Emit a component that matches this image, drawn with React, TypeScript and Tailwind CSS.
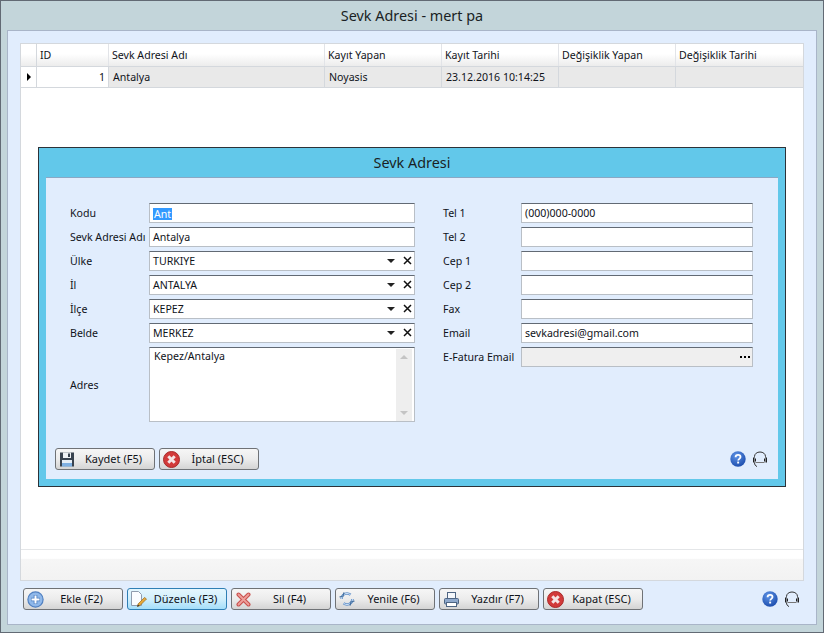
import type { ReactNode } from "react";

const columns = [
  { w: "w-[72px]", label: "ID", value: "1", right: true },
  { w: "w-[216px]", label: "Sevk Adresi Adı", value: "Antalya" },
  { w: "w-[117px]", label: "Kayıt Yapan", value: "Noyasis" },
  { w: "w-[117px]", label: "Kayıt Tarihi", value: "23.12.2016 10:14:25" },
  { w: "w-[117px]", label: "Değişiklik Yapan", value: "" },
  { w: "flex-1", label: "Değişiklik Tarihi", value: "" },
];

function HelpIcon() {
  return (
    <svg width="16" height="16" viewBox="0 0 16 16">
      <defs>
        <radialGradient id="helpFill" cx="40%" cy="30%" r="80%">
          <stop offset="0" stopColor="#5f94e6" />
          <stop offset="1" stopColor="#1546a8" />
        </radialGradient>
      </defs>
      <circle cx="8" cy="8" r="7.7" fill="url(#helpFill)" />
      <path d="M5.6 6.2c0-1.5 1.1-2.3 2.5-2.3s2.4.8 2.4 2.1c0 1.9-2.3 1.9-2.3 3.6" fill="none" stroke="#fff" strokeWidth="1.8" />
      <rect x="7.2" y="10.6" width="1.9" height="1.9" fill="#fff" />
    </svg>
  );
}

function HeadsetIcon() {
  return (
    <svg width="16" height="17" viewBox="0 0 16 17" fill="none" stroke="#333">
      <path d="M2.500 6.500V5.500C2.500 2.800 5 1 8 1s5.500 1.800 5.500 4.500v1" />
      <path d="M2.500 11.500c0 2.200 1 3.500 2.500 4" />
      <path d="M3.500 11.500h9" stroke="#777" />
      <rect x="1" y="6.500" width="1.500" height="5" fill="#222" stroke="none" />
      <rect x="3" y="7.500" width="1" height="3" fill="#222" stroke="none" />
      <rect x="12" y="7.500" width="1" height="3" fill="#222" stroke="none" />
      <rect x="13.500" y="6.500" width="1.500" height="5" fill="#222" stroke="none" />
    </svg>
  );
}

function SaveIcon() {
  return (
    <svg width="15" height="15" viewBox="0 0 15 15">
      <rect x="0" y="0.500" width="14" height="14" fill="#39434f" />
      <rect x="3" y="0.500" width="8" height="5.500" fill="#eef1f4" />
      <rect x="8" y="1.500" width="2" height="3.500" fill="#39434f" />
      <rect x="2" y="8" width="10" height="6.500" fill="#e6eef6" />
      <rect x="2" y="11" width="10" height="3.500" fill="#7fb0e2" />
    </svg>
  );
}

function CancelIcon() {
  return (
    <svg width="17" height="17" viewBox="0 0 17 17">
      <circle cx="8.500" cy="8.500" r="8" fill="#d23a3a" stroke="#a82a2a" />
      <path d="M5.300 5.300l6.400 6.400M11.700 5.300l-6.400 6.400" stroke="#f4e4e4" strokeWidth="3" />
    </svg>
  );
}

function AddIcon() {
  return (
    <svg width="17" height="17" viewBox="0 0 17 17">
      <circle cx="8.500" cy="8.500" r="7.600" fill="#8fb8ea" stroke="#4f7fc0" strokeWidth="1.200" />
      <path d="M8.500 4v9M4 8.500h9" stroke="#4f7fc0" strokeWidth="3.600" />
      <path d="M8.500 4.500v8M4.500 8.500h8" stroke="#fff" strokeWidth="2" />
    </svg>
  );
}

function EditIcon() {
  return (
    <svg width="16" height="16" viewBox="0 0 16 16">
      <path d="M0.500 0.500h7l3 3v11h-10z" fill="#fafcff" stroke="#8f9cae" />
      <path d="M13.500 6.500l2 1.500-6.500 6.500-2.500 1 .7-2.700z" fill="#e8a93a" stroke="#9a6a1c" strokeWidth="0.700" />
      <path d="M6.300 15.700l.5-2.200 1.600 1.300z" fill="#333" />
    </svg>
  );
}

function DeleteIcon() {
  return (
    <svg width="15" height="15" viewBox="0 0 15 15">
      <path d="M2.500 2.500l10 10M12.500 2.500l-10 10" stroke="#c9504e" strokeWidth="4" strokeLinecap="round" />
      <path d="M2.500 2.500l10 10M12.500 2.500l-10 10" stroke="#ee9f9a" strokeWidth="1.800" strokeLinecap="round" />
    </svg>
  );
}

function RefreshIcon() {
  return (
    <svg width="16" height="16" viewBox="0 0 16 16" fill="none">
      <circle cx="8" cy="8" r="5.500" stroke="#5f8fc8" strokeWidth="2.600" strokeDasharray="12 5" />
      <circle cx="8" cy="8" r="5.500" stroke="#d2e3f6" strokeWidth="1" strokeDasharray="12 5" />
      <path d="M0.500 6l3.500-1 1-3.500M15.500 10l-3.500 1-1 3.500" stroke="#47719f" strokeWidth="1.200" />
    </svg>
  );
}

function PrintIcon() {
  return (
    <svg width="15" height="15" viewBox="0 0 15 15">
      <rect x="3.500" y="0.500" width="8" height="6" fill="#f4f7fb" stroke="#4e6583" />
      <rect x="0.500" y="6.500" width="14" height="5.500" rx="1" fill="#8fa9cc" stroke="#4e6583" />
      <rect x="2.500" y="10.500" width="10" height="4" fill="#fff" stroke="#4e6583" />
    </svg>
  );
}

function Btn({ icon, label, active }: { icon: ReactNode; label: string; active?: boolean }) {
  return (
    <button
      className={`flex h-[22px] w-[100px] items-center rounded-[3px] border pl-[2px] text-[11px] whitespace-nowrap text-[#10131a] ${
        active
          ? "border-[#2f7fb5] bg-[linear-gradient(#e4f6fe,#d2effc_50%,#a4defa)]"
          : "border-[#6f7276] bg-[linear-gradient(#f6f6f6,#ececec_50%,#d4d4d4)]"
      }`}
    >
      <span className="flex w-[18px] items-center justify-center">{icon}</span>
      <span className="flex-1 pt-[1px] pr-[3px] text-center">{label}</span>
    </button>
  );
}

function Box({ children, className = "" }: { children?: ReactNode; className?: string }) {
  return (
    <div
      className={`flex h-5 items-center border border-[#b9bfc6] border-t-[#626a74] pl-[3px] text-[10.6px] whitespace-nowrap text-[#10131a] ${className}`}
    >
      {children}
    </div>
  );
}

function Value({ children }: { children: ReactNode }) {
  return <span className="flex-1 pt-[1px]">{children}</span>;
}

function Field({ label, labelWidth, children }: { label: string; labelWidth: string; children: ReactNode }) {
  return (
    <div className="flex items-center">
      <div className={`${labelWidth} pt-[2px] text-[10.6px] whitespace-nowrap text-[#10131a]`}>{label}</div>
      <div className="flex-1">{children}</div>
    </div>
  );
}

function Lookup({ value }: { value: string }) {
  return (
    <Box className="bg-white">
      <Value>{value}</Value>
      <span className="mr-[8px] h-0 w-0 border-x-[4px] border-t-[4px] border-x-transparent border-t-[#222]" />
      <svg width="9" height="9" viewBox="0 0 9 9" className="mr-[2px] -mt-[1px]">
        <path d="M1 1l7 7M8 1L1 8" stroke="#111" strokeWidth="1.500" />
      </svg>
    </Box>
  );
}

function Dialog() {
  return (
    <div className="absolute top-[146px] left-[37px] flex h-[340px] w-[748px] flex-col border border-[#2c3238] bg-[#62c8ea] px-[7px] pb-[7px]">
      <div className="flex h-[29px] items-center justify-center text-[14.4px] text-[#1a1f24]">Sevk Adresi</div>
      <div className="flex flex-1 flex-col border-t border-[#8aa8c4] bg-[#e1edfd] pt-[25px]">
        <div className="flex pl-[24px]">
          <div className="flex w-[345px] flex-col gap-1">
            <Field label="Kodu" labelWidth="w-[79px]">
              <Box className="bg-white pl-[2px]">
                <span className="mt-[1px] bg-[#3399ff] px-[1px] leading-[12px] text-white">Ant</span>
              </Box>
            </Field>
            <Field label="Sevk Adresi Adı" labelWidth="w-[79px]">
              <Box className="bg-white">
                <Value>Antalya</Value>
              </Box>
            </Field>
            <Field label="Ülke" labelWidth="w-[79px]">
              <Lookup value="TURKIYE" />
            </Field>
            <Field label="İl" labelWidth="w-[79px]">
              <Lookup value="ANTALYA" />
            </Field>
            <Field label="İlçe" labelWidth="w-[79px]">
              <Lookup value="KEPEZ" />
            </Field>
            <Field label="Belde" labelWidth="w-[79px]">
              <Lookup value="MERKEZ" />
            </Field>
            <Field label="Adres" labelWidth="w-[79px]">
              <div className="flex h-[75px] border border-[#b9bfc6] border-t-[#626a74] bg-white pt-[1px] pr-[2px] pl-[4px] text-[10.6px] text-[#10131a]">
                <span className="flex-1">Kepez/Antalya</span>
                <div className="flex w-4 flex-col items-center justify-between bg-[#eeeeee] py-[6px]">
                  <span className="h-0 w-0 border-x-[4px] border-b-[4px] border-x-transparent border-b-[#c4c4c4]" />
                  <span className="h-0 w-0 border-x-[4px] border-t-[4px] border-x-transparent border-t-[#c4c4c4]" />
                </div>
              </div>
            </Field>
          </div>
          <div className="ml-[28px] flex w-[310px] flex-col gap-1">
            <Field label="Tel 1" labelWidth="w-[78px]">
              <Box className="bg-white">
                <Value>(000)000-0000</Value>
              </Box>
            </Field>
            <Field label="Tel 2" labelWidth="w-[78px]">
              <Box className="bg-white" />
            </Field>
            <Field label="Cep 1" labelWidth="w-[78px]">
              <Box className="bg-white" />
            </Field>
            <Field label="Cep 2" labelWidth="w-[78px]">
              <Box className="bg-white" />
            </Field>
            <Field label="Fax" labelWidth="w-[78px]">
              <Box className="bg-white" />
            </Field>
            <Field label="Email" labelWidth="w-[78px]">
              <Box className="bg-white">
                <Value>sevkadresi@gmail.com</Value>
              </Box>
            </Field>
            <Field label="E-Fatura Email" labelWidth="w-[78px]">
              <Box className="justify-end bg-[#efefef] pr-[2px]">
                <div className="flex gap-[2px]">
                  <span className="h-[2px] w-[2px] bg-black" />
                  <span className="h-[2px] w-[2px] bg-black" />
                  <span className="h-[2px] w-[2px] bg-black" />
                </div>
              </Box>
            </Field>
          </div>
        </div>
        <div className="mt-[26px] flex items-center pr-[10px] pl-[9px]">
          <div className="flex flex-1 gap-1">
            <Btn icon={<SaveIcon />} label="Kaydet (F5)" />
            <Btn icon={<CancelIcon />} label="İptal (ESC)" />
          </div>
          <div className="flex items-center gap-[6px]">
            <HelpIcon />
            <HeadsetIcon />
          </div>
        </div>
      </div>
    </div>
  );
}

export default function App() {
  return (
    <div
      className="relative flex h-[633px] w-[824px] flex-col overflow-hidden border border-[#626a74] bg-[#c3d5da] px-[6px] pb-[7px]"
      style={{ fontFamily: '"Noto Sans", "Liberation Sans", sans-serif' }}
    >
      <div className="flex h-[29px] items-center justify-center text-[14.4px] text-[#1a1f24]">Sevk Adresi - mert pa</div>
      <div className="flex flex-1 flex-col border border-[#a9b5c8] bg-[#e1edfd] px-3 pt-3 pb-[14px]">
        <div className="flex flex-1 flex-col border border-[#d4d8dd] bg-white">
          <div className="flex h-[23px] border-b border-[#d4d8dd] bg-[linear-gradient(#ffffff_45%,#ececec)] text-[10.6px] text-[#10131a]">
            <div className="w-[16px] border-r border-[#d4d8dd]" />
            {columns.map((c) => (
              <div key={c.label} className={`${c.w} flex items-center border-r border-[#e2e4e8] pt-[1px] pl-[3px] whitespace-nowrap last:border-r-0`}>
                {c.label}
              </div>
            ))}
          </div>
          <div className="flex h-[21px] border-b border-[#d4d8dd] bg-[#e9e9e9] text-[10.6px] text-[#10131a]">
            <div className="flex w-[16px] items-center justify-center border-r border-[#d4d8dd] bg-white">
              <span className="h-0 w-0 border-y-[4px] border-l-[4px] border-y-transparent border-l-black" />
            </div>
            {columns.map((c) => (
              <div
                key={c.label}
                className={`${c.w} flex items-center border-r border-[#d4d8dd] pt-[1px] pr-[3px] pl-[4px] whitespace-nowrap last:border-r-0 ${c.right ? "justify-end bg-white" : ""}`}
              >
                {c.value}
              </div>
            ))}
          </div>
          <div className="flex-1" />
          <div className="h-[31px] border-t border-[#e4e6e8] bg-[linear-gradient(#ffffff_28%,#f6f6f6_30%,#f2f2f2)]" />
        </div>
        <div className="mt-[7px] flex items-center pr-[4px] pl-[3px]">
          <div className="flex flex-1 gap-1">
            <Btn icon={<AddIcon />} label="Ekle (F2)" />
            <Btn icon={<EditIcon />} label="Düzenle (F3)" active />
            <Btn icon={<DeleteIcon />} label="Sil (F4)" />
            <Btn icon={<RefreshIcon />} label="Yenile (F6)" />
            <Btn icon={<PrintIcon />} label="Yazdır (F7)" />
            <Btn icon={<CancelIcon />} label="Kapat (ESC)" />
          </div>
          <div className="flex items-center gap-[6px]">
            <HelpIcon />
            <HeadsetIcon />
          </div>
        </div>
      </div>
      <Dialog />
    </div>
  );
}
